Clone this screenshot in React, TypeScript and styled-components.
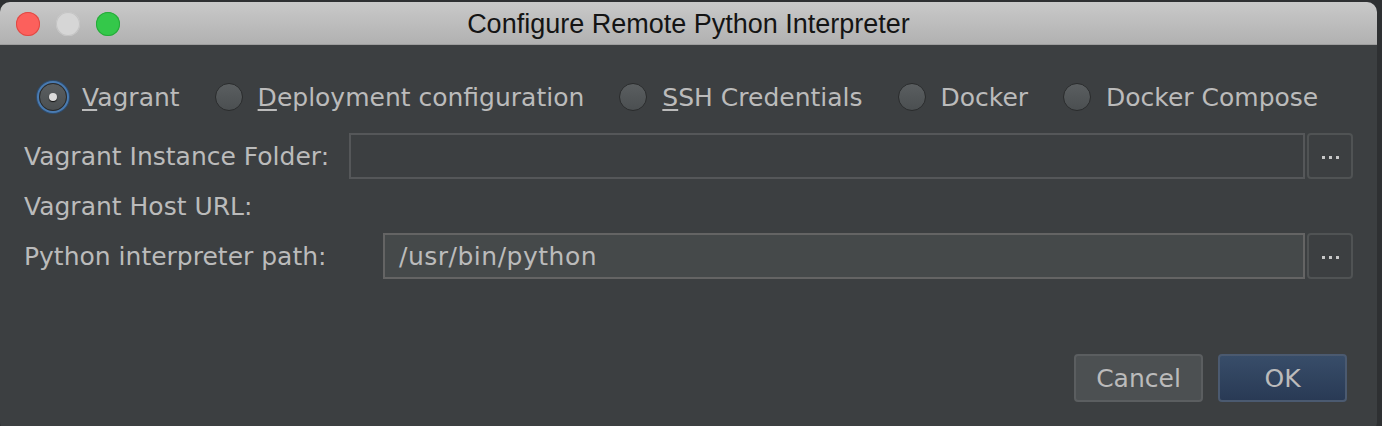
import styled, { createGlobalStyle } from 'styled-components';

const GlobalStyle = createGlobalStyle`
  html, body {
    margin: 0;
    padding: 0;
    background: #2e3032;
  }
  #root {
    width: 1382px;
    height: 426px;
    overflow: hidden;
  }
`;

const Desk = styled.div`
  width: 1382px;
  height: 426px;
  padding-top: 2px;
  padding-right: 5px;
  box-sizing: border-box;
  background: #2e3032;
`;

const Window = styled.div`
  display: flex;
  flex-direction: column;
  height: 430px;
  border-radius: 10px;
  overflow: hidden;
  background: #3c3f41;
`;

const TitleBar = styled.div`
  position: relative;
  height: 42px;
  flex: none;
  display: flex;
  align-items: center;
  justify-content: center;
  background: linear-gradient(#c9c9c9, #b1b1b1);
  border-bottom: 1px solid #9d9d9d;
`;

const Lights = styled.div`
  position: absolute;
  left: 16px;
  top: 10px;
  display: flex;
  gap: 16px;
`;

const Light = styled.span<{ $c: string; $b: string }>`
  width: 24px;
  height: 24px;
  border-radius: 50%;
  background: ${(p) => p.$c};
  box-shadow: inset 0 0 0 1px ${(p) => p.$b};
`;

const Title = styled.div`
  font-family: 'Liberation Sans', Arial, sans-serif;
  font-size: 27px;
  color: #141414;
  padding-top: 3px;
`;

const Body = styled.div`
  flex: 1;
  padding: 36px 24px 0 24px;
  font-family: 'DejaVu Sans', 'Noto Sans', sans-serif;
  font-size: 25px;
  color: #bbbbbb;
`;

const RadioRow = styled.div`
  display: flex;
  align-items: center;
  gap: 35px;
  padding-left: 15px;
  height: 32px;
`;

const RadioItem = styled.label`
  display: flex;
  align-items: center;
  gap: 15px;
`;

const RadioDot = styled.span<{ $on?: boolean }>`
  width: 28px;
  height: 28px;
  border-radius: 50%;
  box-sizing: border-box;
  display: flex;
  align-items: center;
  justify-content: center;
  background: linear-gradient(#5a5e60, #4b4f51);
  border: 1px solid #2a2c2d;
  box-shadow: ${(p) => (p.$on ? '0 0 0 2px #4a7bb1, 0 0 0 3px #2f4d6e' : 'none')};
  &::after {
    content: '';
    display: ${(p) => (p.$on ? 'block' : 'none')};
    width: 8px;
    height: 8px;
    border-radius: 50%;
    background: #dcdcdc;
    box-shadow: 0 1px 1px #111;
  }
`;

const Mn = styled.span`
  text-decoration: underline;
  text-underline-offset: 3px;
`;

const FieldRow = styled.div<{ $top: number }>`
  display: flex;
  align-items: center;
  height: 46px;
  margin-top: ${(p) => p.$top}px;
`;

const Label = styled.div<{ $w?: number }>`
  width: ${(p) => (p.$w ? `${p.$w}px` : 'auto')};
  flex: none;
  white-space: nowrap;
`;

const Input = styled.div<{ $active?: boolean }>`
  flex: 1;
  height: 46px;
  box-sizing: border-box;
  display: flex;
  align-items: center;
  padding-left: 14px;
  border: 2px solid ${(p) => (p.$active ? '#646464' : '#555759')};
  background: ${(p) => (p.$active ? '#45494a' : '#3c3f41')};
  color: #bbbbbb;
  letter-spacing: 0.5px;
`;

const Browse = styled.div`
  width: 46px;
  height: 46px;
  box-sizing: border-box;
  margin-left: 2px;
  border: 2px solid #505354;
  border-radius: 4px;
  display: flex;
  align-items: center;
  justify-content: center;
  gap: 4px;
  & > i {
    width: 3px;
    height: 3px;
    margin-top: 2px;
    background: #c8c8c8;
  }
`;

const Footer = styled.div`
  display: flex;
  justify-content: flex-end;
  gap: 15px;
  margin-top: 75px;
  padding-right: 6px;
`;

const Button = styled.div<{ $primary?: boolean }>`
  width: 129px;
  height: 48px;
  box-sizing: border-box;
  border-radius: 4px;
  display: flex;
  align-items: center;
  justify-content: center;
  font-size: 25px;
  color: #bbbbbb;
  border: 2px solid ${(p) => (p.$primary ? '#4b5a70' : '#5b5e60')};
  background: ${(p) => (p.$primary ? 'linear-gradient(#384d69, #293a55)' : '#4c5052')};
`;

const radios = [
  { key: 'V', rest: 'agrant', on: true },
  { key: 'D', rest: 'eployment configuration' },
  { key: 'S', rest: 'SH Credentials' },
  { key: '', rest: 'Docker' },
  { key: '', rest: 'Docker Compose' },
];

export default function App() {
  return (
    <Desk>
      <GlobalStyle />
      <Window>
        <TitleBar>
          <Lights>
            <Light $c="#fc605c" $b="#de4a45" />
            <Light $c="#d6d6d6" $b="#c4c4c4" />
            <Light $c="#34c84a" $b="#27a93a" />
          </Lights>
          <Title>Configure Remote Python Interpreter</Title>
        </TitleBar>
        <Body>
          <RadioRow>
            {radios.map((r) => (
              <RadioItem key={r.rest}>
                <RadioDot $on={r.on} />
                <span>
                  {r.key && <Mn>{r.key}</Mn>}
                  {r.rest}
                </span>
              </RadioItem>
            ))}
          </RadioRow>
          <FieldRow $top={20}>
            <Label $w={325}>Vagrant Instance Folder:</Label>
            <Input />
            <Browse>
              <i />
              <i />
              <i />
            </Browse>
          </FieldRow>
          <FieldRow $top={4}>
            <Label>Vagrant Host URL:</Label>
          </FieldRow>
          <FieldRow $top={4}>
            <Label $w={359}>Python interpreter path:</Label>
            <Input $active>/usr/bin/python</Input>
            <Browse>
              <i />
              <i />
              <i />
            </Browse>
          </FieldRow>
          <Footer>
            <Button>Cancel</Button>
            <Button $primary>OK</Button>
          </Footer>
        </Body>
      </Window>
    </Desk>
  );
}
